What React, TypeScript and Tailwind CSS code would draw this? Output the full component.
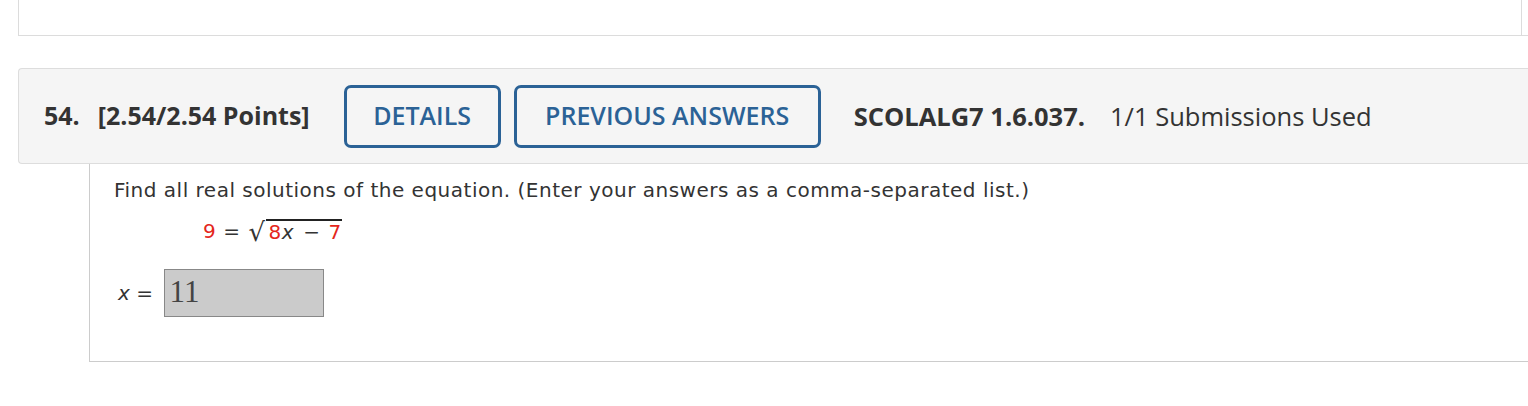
import React from "react";

// Question header + prompt block, WebAssign style
const RED = "text-[#e4261c]";

const OutlineButton: React.FC<{ label: string; width: string }> = ({ label, width }) => (
  <button
    className={`${width} h-[63px] shrink-0 rounded-[7px] border-[3px] border-[#2b6296] bg-transparent text-[25px] font-semibold text-[#2b6296]`}
  >
    {label}
  </button>
);

const App: React.FC = () => {
  return (
    <div className="w-[1528px] h-[406px] overflow-hidden bg-white">
      {/* previous question tail */}
      <div className="ml-[18px] h-[36px] border-l border-b border-[#dcdcdc] flex justify-end">
        <div className="mr-[6px] h-full border-r border-[#dcdcdc]" />
      </div>

      {/* header */}
      <div className="mt-[32px] ml-[18px] h-[96px] flex items-center rounded-l-[4px] border border-r-0 border-[#dddddd] bg-[#f5f5f5] pl-[25px] font-['Open_Sans',sans-serif] text-[#333333]">
        <span className="text-[25px] font-bold">54.</span>
        <span className="ml-[18px] text-[25px] font-bold">[2.54/2.54 Points]</span>
        <div className="ml-[34px] flex gap-[13px]">
          <OutlineButton label="DETAILS" width="w-[157px]" />
          <OutlineButton label="PREVIOUS ANSWERS" width="w-[307px]" />
        </div>
        <span className="ml-[33px] text-[25.5px] font-bold">SCOLALG7 1.6.037.</span>
        <span className="ml-[25px] text-[25.5px]">1/1 Submissions Used</span>
      </div>

      {/* question body */}
      <div className="ml-[89px] h-[198px] border-l border-b border-[#cccccc] pl-[24px] pt-[14px] font-['DejaVu_Sans',sans-serif] text-[20px] tracking-[0.5px] text-[#333333]">
        <p className="leading-[24px]">
          Find all real solutions of the equation. (Enter your answers as a comma-separated list.)
        </p>

        <div className="mt-[17px] ml-[89px] flex items-end leading-[24px]">
          <span className={RED}>9</span>
          <span className="ml-[7px]">=</span>
          <span className="ml-[8px] mb-[-3px] text-[26px] leading-[27px]">√</span>
          <span className="border-t-[2px] border-[#222] pl-[3px] leading-[22px]">
            <span className={RED}>8</span>
            <span className="italic">x</span>
            <span className="ml-[9px]">−</span>
            <span className={`ml-[8px] ${RED}`}>7</span>
          </span>
        </div>

        <div className="mt-[26px] ml-[4px] flex items-center">
          <span className="italic">x</span>
          <span className="ml-[6px]">=</span>
          <div className="ml-[10px] h-[48px] w-[160px] border border-[#888888] bg-[#cbcbcb] pl-[5px] font-['Liberation_Serif',serif] text-[31px] tracking-normal leading-[44px] text-[#444444]">
            11
          </div>
        </div>
      </div>
    </div>
  );
};

export default App;
